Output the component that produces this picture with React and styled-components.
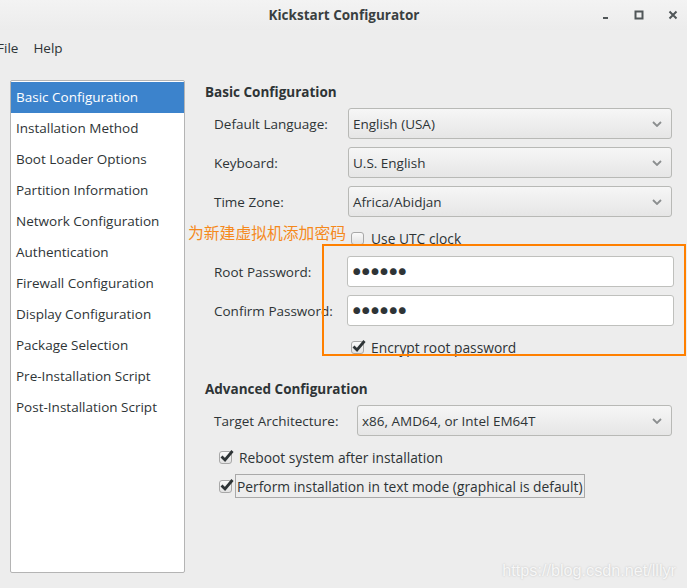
import React from 'react';
import styled, { createGlobalStyle } from 'styled-components';

const GlobalStyle = createGlobalStyle`
  html, body {
    margin: 0;
    padding: 0;
    background: #ededed;
  }
  * { box-sizing: border-box; }
`;

const FONT = `"Open Sans", "Noto Sans", "Noto Sans CJK SC", sans-serif`;

const menus = [
  'Basic Configuration',
  'Installation Method',
  'Boot Loader Options',
  'Partition Information',
  'Network Configuration',
  'Authentication',
  'Firewall Configuration',
  'Display Configuration',
  'Package Selection',
  'Pre-Installation Script',
  'Post-Installation Script',
];

const Chevron = () => (
  <svg width="10" height="6" viewBox="0 0 10 6">
    <path d="M1 1 L5 5 L9 1" fill="none" stroke="#8b8e8f" strokeWidth="1.8" />
  </svg>
);

const Check = () => (
  <svg width="15" height="14" viewBox="0 0 15 14">
    <path d="M2.5 7.5 L6 11 L13.5 2" fill="none" stroke="#2e3436" strokeWidth="2.8" />
  </svg>
);

export default function App() {
  return (
    <>
      <GlobalStyle />
      <SWindow>
        <STitleBar>
          <span />
          <STitle>Kickstart Configurator</STitle>
          <SControls>
            <svg width="8" height="10" viewBox="0 0 8 10">
              <rect x="1" y="7" width="5" height="2" fill="#505658" />
            </svg>
            <svg width="10" height="10" viewBox="0 0 10 10">
              <rect x="1.5" y="1.5" width="7" height="7" fill="none" stroke="#505658" strokeWidth="2" />
            </svg>
            <svg width="10" height="10" viewBox="0 0 10 10">
              <path d="M1.5 1.5 L8.5 8.5 M8.5 1.5 L1.5 8.5" stroke="#505658" strokeWidth="2" />
            </svg>
          </SControls>
        </STitleBar>

        <SMenuBar>
          <SMenuItem>File</SMenuItem>
          <SMenuItem>Help</SMenuItem>
        </SMenuBar>

        <SBody>
          <SSidebar>
            {menus.map((m, i) => (
              <SSideItem key={m} selected={i === 0}>{m}</SSideItem>
            ))}
          </SSidebar>

          <SMain>
            <SHeader>Basic Configuration</SHeader>
            <SForm label={134} top={6}>
              <SLabel>Default Language:</SLabel>
              <SCombo><span>English (USA)</span><Chevron /></SCombo>
              <SLabel>Keyboard:</SLabel>
              <SCombo><span>U.S. English</span><Chevron /></SCombo>
              <SLabel>Time Zone:</SLabel>
              <SCombo><span>Africa/Abidjan</span><Chevron /></SCombo>
            </SForm>

            <SCheckRow indent={146} top={11}>
              <SCheckBox />
              <span>Use UTC clock</span>
            </SCheckRow>

            <SForm label={133} top={8}>
              <SLabel>Root Password:</SLabel>
              <SEntry>●●●●●●</SEntry>
              <SLabel>Confirm Password:</SLabel>
              <SEntry>●●●●●●</SEntry>
            </SForm>

            <SCheckRow indent={146} top={11}>
              <SCheckBox><Check /></SCheckBox>
              <span>Encrypt root password</span>
            </SCheckRow>

            <SHeader top={22}>Advanced Configuration</SHeader>
            <SForm label={143} top={6}>
              <SLabel>Target Architecture:</SLabel>
              <SCombo><span>x86, AMD64, or Intel EM64T</span><Chevron /></SCombo>
            </SForm>

            <SCheckRow indent={14} top={11}>
              <SCheckBox><Check /></SCheckBox>
              <span>Reboot system after installation</span>
            </SCheckRow>

            <SCheckRow indent={14} top={9}>
              <SCheckBox><Check /></SCheckBox>
              <SFocus>Perform installation in text mode (graphical is default)</SFocus>
            </SCheckRow>
          </SMain>
        </SBody>

        <SNote>为新建虚拟机添加密码</SNote>
        <SHighlight />
        <SWatermark>https://blog.csdn.net/lllyr</SWatermark>
      </SWindow>
    </>
  );
}

const SWindow = styled.div`
  position: relative;
  width: 687px;
  height: 588px;
  overflow: hidden;
  background: #ededed;
  font-family: ${FONT};
  color: #2e3436;
  font-size: 13px;
`;

const STitleBar = styled.div`
  height: 30px;
  display: grid;
  grid-template-columns: 1fr auto 1fr;
  align-items: center;
  background: linear-gradient(#f3f3f3, #ececec);
`;

const STitle = styled.div`
  font-weight: 700;
  font-size: 13.5px;
  color: #3a3f41;
  padding-left: 1px;
`;

const SControls = styled.div`
  display: flex;
  justify-content: flex-end;
  align-items: center;
  gap: 24px;
  padding-right: 9px;
`;

const SMenuBar = styled.div`
  height: 34px;
  display: flex;
  align-items: center;
  gap: 15px;
  margin-left: -3px;
  padding-top: 1px;
`;

const SMenuItem = styled.span`
  font-size: 13.5px;
`;

const SBody = styled.div`
  display: flex;
  padding: 16px 0 0 10px;
`;

const SSidebar = styled.div`
  width: 175px;
  height: 493px;
  flex-shrink: 0;
  background: #fff;
  border: 1px solid #b4b4b4;
  border-radius: 2px;
  padding-top: 1px;
`;

const SSideItem = styled.div`
  height: 31px;
  line-height: 31px;
  padding-left: 5px;
  font-size: 13.5px;
  background: ${(p) => (p.selected ? '#3c83cc' : 'transparent')};
  color: ${(p) => (p.selected ? '#fff' : '#2e3436')};
`;

const SMain = styled.div`
  flex: 1;
  display: flex;
  flex-direction: column;
  padding: 2px 15px 0 20px;
`;

const SHeader = styled.div`
  height: 20px;
  line-height: 20px;
  font-weight: 700;
  font-size: 13.5px;
  margin-top: ${(p) => p.top || 0}px;
`;

const SForm = styled.div`
  display: grid;
  grid-template-columns: ${(p) => p.label}px 1fr;
  row-gap: 8px;
  align-items: center;
  padding-left: 9px;
  margin-top: ${(p) => p.top || 0}px;
`;

const SLabel = styled.span`
  font-size: 13.5px;
`;

const SCombo = styled.div`
  height: 31px;
  display: flex;
  align-items: center;
  justify-content: space-between;
  padding: 0 9px 0 4px;
  border: 1px solid #b8b9b6;
  border-radius: 3px;
  background: linear-gradient(#f6f6f6, #e6e6e6);
  font-size: 13.5px;
`;

const SEntry = styled.div`
  height: 31px;
  display: flex;
  align-items: center;
  padding-left: 5px;
  margin-right: -2px;
  border: 1px solid #bfc0bd;
  border-radius: 3px;
  background: #fff;
  font-size: 7.5px;
  letter-spacing: 1.6px;
  color: #2e3436;
`;

const SCheckRow = styled.div`
  height: 20px;
  display: flex;
  align-items: center;
  gap: 7px;
  padding-left: ${(p) => p.indent}px;
  margin-top: ${(p) => p.top || 0}px;
  font-size: 13.8px;
`;

const SCheckBox = styled.div`
  position: relative;
  width: 13px;
  height: 13px;
  flex-shrink: 0;
  border: 1px solid #a8a8a8;
  border-radius: 3px;
  background: linear-gradient(#fafafa, #e2e2e2);
  & svg { position: absolute; left: -1px; top: -3px; overflow: visible; }
`;

const SFocus = styled.span`
  height: 24px;
  display: flex;
  align-items: center;
  padding: 0 1px;
  margin-left: -4px;
  border: 1px solid #a9a9a9;
`;

const SNote = styled.div`
  position: absolute;
  left: 188px;
  top: 221px;
  font-size: 15.8px;
  color: #f5891c;
  font-family: "Noto Sans CJK SC", sans-serif;
`;

const SHighlight = styled.div`
  position: absolute;
  left: 322px;
  top: 244px;
  width: 364px;
  height: 112px;
  border: 2px solid #ff8000;
  pointer-events: none;
`;

const SWatermark = styled.div`
  position: absolute;
  right: 11px;
  bottom: 8px;
  font-family: "Liberation Sans", Arial, sans-serif;
  font-size: 16.2px;
  color: #f7f7f7;
  text-shadow: 0 0 2px #bdbdbd;
`;
